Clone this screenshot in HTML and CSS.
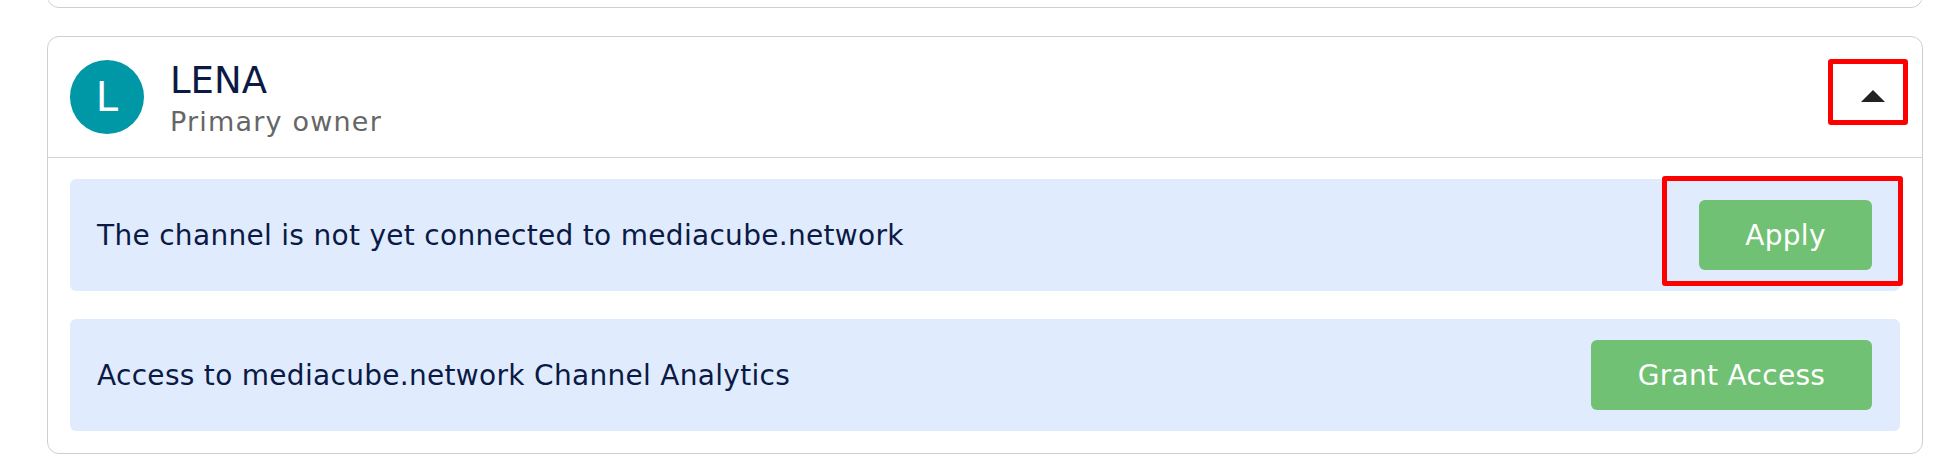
FILE: index.html
```html
<!DOCTYPE html>
<html lang="en">
<head>
<meta charset="utf-8">
<title>Channel owner</title>
<link rel="stylesheet" href="styles.css">
</head>
<body>
<div class="page">
  <div class="card card-prev"></div>
  <div class="card">
    <div class="card-header">
      <div class="avatar">L</div>
      <div class="owner">
        <div class="owner-name">LENA</div>
        <div class="owner-role">Primary owner</div>
      </div>
      <button class="toggle" type="button" aria-label="Collapse"><span class="caret"></span></button>
    </div>
    <div class="card-body">
      <div class="notice">
        <span class="notice-text">The channel is not yet connected to mediacube.network</span>
        <button class="btn btn-apply" type="button">Apply</button>
        <span class="highlight"></span>
      </div>
      <div class="notice">
        <span class="notice-text">Access to mediacube.network Channel Analytics</span>
        <button class="btn btn-grant" type="button">Grant Access</button>
      </div>
    </div>
  </div>
</div>
</body>
</html>
```

FILE: styles.css
```css
* { box-sizing: border-box; }
html, body { margin: 0; padding: 0; background: #ffffff; }
body {
  font-family: "DejaVu Sans", "Liberation Sans", sans-serif;
  color: #0b1a45;
  overflow: hidden;
}
.page {
  padding: 0 21px 0 47px;
}
.card {
  border: 1px solid #cfcfcf;
  border-radius: 12px;
  background: #fff;
  margin-top: 28px;
}
.card-prev {
  height: 40px;
  margin-top: -32px;
}
.card-header {
  display: flex;
  align-items: center;
  height: 121px;
  padding: 0 14px 0 22px;
  border-bottom: 1px solid #d4d4d4;
}
.avatar {
  width: 74px;
  height: 74px;
  border-radius: 50%;
  background: #0097a7;
  color: #fff;
  font-size: 40px;
  font-weight: 400;
  display: flex;
  align-items: center;
  justify-content: center;
  flex: none;
}
.owner {
  margin-left: 26px;
  padding-top: 2px;
  flex: 1;
  display: flex;
  flex-direction: column;
  gap: 3px;
}
.owner-name {
  font-size: 37px;
  line-height: 44px;
  color: #0b1a45;
}
.owner-role {
  font-size: 27px;
  line-height: 32px;
  color: #666666;
  letter-spacing: 1.2px;
}
.toggle {
  width: 80px;
  height: 66px;
  margin-top: -10px;
  border: 5px solid #ff0000;
  border-radius: 3px;
  background: transparent;
  padding: 0 18px 18px 0;
  display: flex;
  justify-content: flex-end;
  align-items: flex-end;
  cursor: pointer;
}
.caret {
  width: 0;
  height: 0;
  border-left: 12px solid transparent;
  border-right: 12px solid transparent;
  border-bottom: 12px solid #222222;
}
.card-body {
  padding: 21px 22px 22px 22px;
  display: flex;
  flex-direction: column;
  gap: 28px;
}
.notice {
  position: relative;
  display: flex;
  align-items: center;
  justify-content: space-between;
  background: #e0ecfd;
  border-radius: 6px;
  padding: 21px 28px 21px 27px;
}
.notice-text {
  font-size: 28px;
  letter-spacing: 0.3px;
  color: #0b1a45;
}
.btn {
  height: 70px;
  padding: 0 44px;
  border: none;
  border-radius: 6px;
  background: #71c174;
  color: #ffffff;
  font-family: inherit;
  font-size: 28px;
  letter-spacing: 0.3px;
  cursor: pointer;
}
.btn-apply {
  min-width: 173px;
}
.btn-grant {
  min-width: 281px;
}
.highlight {
  position: absolute;
  top: -3px;
  right: -3px;
  width: 241px;
  height: 110px;
  border: 5px solid #ff0000;
  border-radius: 3px;
  pointer-events: none;
}
```
